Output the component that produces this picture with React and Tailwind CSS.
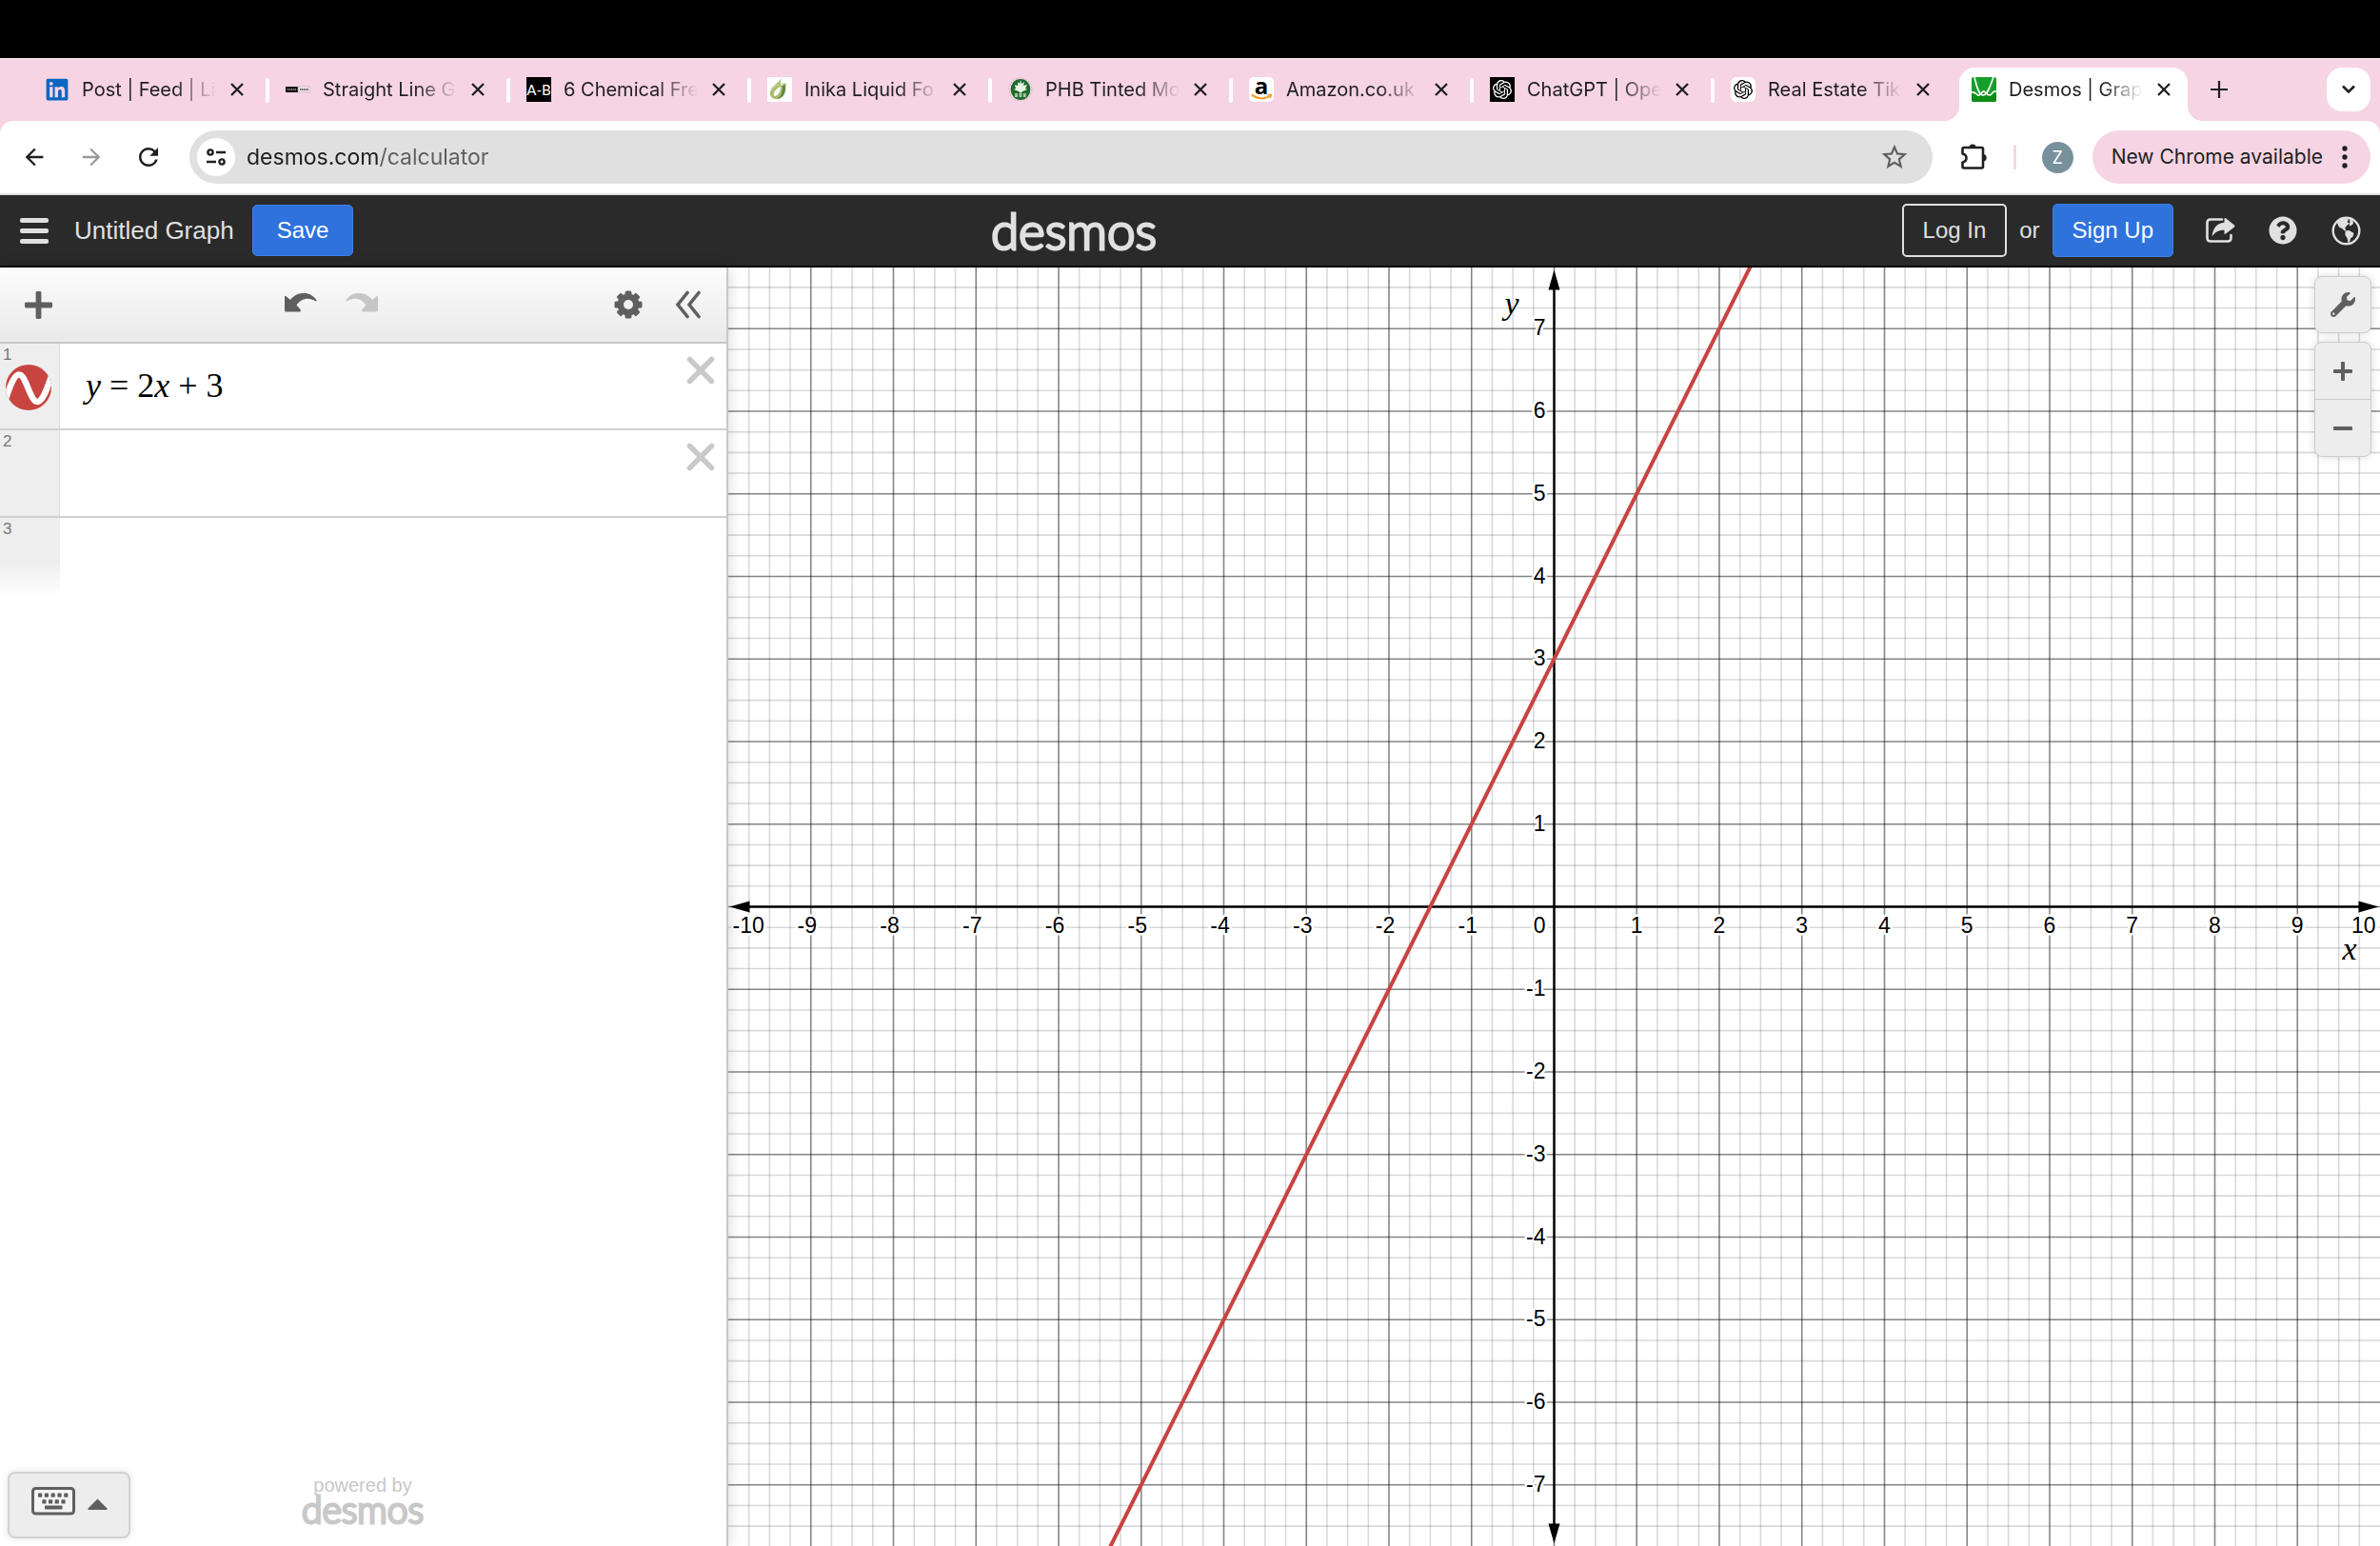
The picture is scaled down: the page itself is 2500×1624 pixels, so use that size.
import { useState } from "react";
import {
  MdArrowBack,
  MdArrowForward,
  MdRefresh,
  MdStarOutline,
} from "react-icons/md";
import { FaLinkedin, FaQuestionCircle, FaWrench } from "react-icons/fa";
import { SiOpenai } from "react-icons/si";

/* ================= FAVICONS ================= */
const LineFavicon = () => (
  <svg viewBox="0 0 26 26" className="size-[26px]">
    <rect x="0" y="10" width="13" height="6" fill="#111" />
    <rect x="13" y="10" width="13" height="6" fill="#f3e4ea" stroke="#b9a9af" strokeWidth="0.6" />
    <path d="M2 13h9" stroke="#999" strokeWidth="1.6" strokeDasharray="1.4 0.6" />
    <path d="M15 13h9" stroke="#333" strokeWidth="1.6" strokeDasharray="1.4 0.6" />
  </svg>
);

const AbFavicon = () => (
  <span className="flex size-[26px] items-center justify-center bg-black font-['Lato',sans-serif] text-[15px] leading-none text-white">
    A-B
  </span>
);

const LeafFavicon = () => (
  <svg viewBox="0 0 26 26" className="size-[26px] bg-white">
    <path d="M15 1C12 6 3 10 3 17c0 4 3 6 7 6 5 0 9-4 9-13l1-3c-2 0-4 0-5 2-2-2-1-5 0-8z" fill="#a9bd6c" />
    <path d="M19 8c1 8-2 14-9 15 5-3 6-8 6-14z" fill="#5d8a45" />
    <path d="M14 10c-5 2-8 6-7 10 4 0 7-4 7-10z" fill="#fff" />
    <path d="M4 12c4-4 9-6 17-6-7 1-12 3-17 8z" fill="#c6cf94" />
  </svg>
);

const PhbFavicon = () => (
  <svg viewBox="0 0 26 26" className="size-[26px]">
    <circle cx="13" cy="13" r="12" fill="none" stroke="#d9bccb" strokeWidth="1.2" strokeDasharray="2 1.4" />
    <ellipse cx="13" cy="13" rx="10.4" ry="11" fill="#1e6b2e" />
    <path
      d="M7 8l3 1 0-4 2 2 1-4 1 4 3-2-1 4 4-1-2 4 2 1-5 2-2 2-2-2-5-2 2-1z"
      fill="#e6f2e4"
    />
    <path d="M7 19h12" stroke="#9bc7a0" strokeWidth="4" strokeDasharray="3 1.4" />
  </svg>
);

const AmazonFavicon = () => (
  <span className="relative flex size-[26px] justify-center rounded-[5px] bg-white">
    <span className="font-['Open_Sans',sans-serif] text-[24px] font-bold leading-[18px] text-black">a</span>
    <svg viewBox="0 0 26 26" className="absolute inset-0 size-[26px]">
      <path d="M3 18.5c6 5 14 5 19 1" fill="none" stroke="#f79a1c" strokeWidth="2" />
      <path d="M19.5 18.6l4-.2-1.4 3.8" fill="none" stroke="#f79a1c" strokeWidth="1.4" />
    </svg>
  </span>
);

const DesmosFavicon = () => (
  <svg viewBox="0 0 26 26" className="size-[26px]">
    <rect width="26" height="26" rx="2" fill="#13a02a" />
    <path d="M0 17c4-3 7 4 10 2s4-5 7-2 5 0 9-1v8q0 2-2 2H2q-2 0-2-2z" fill="#0d8c17" />
    <path d="M3 0c2 8 4 19 9 19S20 8 23 0" fill="none" stroke="#fff" strokeWidth="1.6" />
    <path d="M0 16c5-1 5 4 8 3s3-5 5-4 3 4 6 4 2-5 7-4" fill="none" stroke="#fff" strokeWidth="1.6" />
  </svg>
);

const tabs = [
  { title: "Post | Feed | Li", icon: <FaLinkedin className="size-[26px] text-[#0a66c2]" /> },
  { title: "Straight Line G", icon: <LineFavicon /> },
  { title: "6 Chemical Fre", icon: <AbFavicon /> },
  { title: "Inika Liquid Fo", icon: <LeafFavicon /> },
  { title: "PHB Tinted Mo", icon: <PhbFavicon /> },
  { title: "Amazon.co.uk", icon: <AmazonFavicon /> },
  {
    title: "ChatGPT | Ope",
    icon: <SiOpenai className="size-[26px] bg-black p-[3px] text-white" />,
  },
  {
    title: "Real Estate Tik",
    icon: <SiOpenai className="size-[26px] rounded-[6px] bg-white p-[3px] text-black" />,
  },
  { title: "Desmos | Grap", icon: <DesmosFavicon />, active: true },
];

/* ================= SMALL ICONS ================= */
const CloseIcon = () => (
  <svg viewBox="0 0 14 14" className="size-[14px]" stroke="#1f1f1f" strokeWidth="2.3">
    <path d="M1 1l12 12M13 1L1 13" />
  </svg>
);

const TuneIcon = () => (
  <svg viewBox="0 0 20 20" className="size-5" fill="none" stroke="#1f1f1f" strokeWidth="2.4">
    <circle cx="4" cy="5" r="2.6" />
    <circle cx="16" cy="15" r="2.6" />
    <path d="M10 5h10M0 15h10" />
  </svg>
);

const PuzzleIcon = () => (
  <svg viewBox="0 0 28 28" className="size-7">
    <path
      d="M1.500 5.500q0-1.500 1.500-1.500h18.500q1.500 0 1.500 1.500v18.500q0 1.500-1.500 1.500H3q-1.500 0-1.500-1.500v-4.500q4-.8 4-4.500t-4-4.500z"
      fill="none"
      stroke="#1f1f1f"
      strokeWidth="2.6"
      strokeLinejoin="round"
    />
    <path d="M8.500 4a3.600 3.600 0 0 1 7.200 0zM23 11a3.600 3.600 0 0 1 0 7.400z" fill="#1f1f1f" />
  </svg>
);

const PlusIcon = () => (
  <svg viewBox="0 0 20 20" className="h-full w-full" fill="currentColor">
    <rect x="0" y="8" width="20" height="4" rx="1" />
    <rect x="8" y="0" width="4" height="20" rx="1" />
  </svg>
);

const UndoIcon = () => (
  <svg viewBox="0 0 34 20" className="h-5 w-[34px]" fill="currentColor">
    <path d="M0 3.500q.4-1.600 1.800 0l4.200 3.500C12-1.500 27-3.500 33.500 7.500c.5 1-.3 1.200-1 .7C25 3.500 17 5.500 12.500 12.500l4 4.500c.8 1.500.2 2.500-1 2.500H1.800Q0 19.500 0 18z" />
  </svg>
);

const GearIcon = () => (
  <svg viewBox="-15 -15 30 30" className="size-[30px]" fill="#5f5f5f">
    {[0, 45, 90, 135].map((a) => (
      <rect key={a} x="-3.400" y="-14.500" width="6.800" height="29" rx="1.500" transform={`rotate(${a})`} />
    ))}
    <circle r="11.500" />
    <circle r="5" fill="#f1f1f1" />
  </svg>
);

const CollapseIcon = () => (
  <svg viewBox="0 0 28 30" className="h-[30px] w-7" fill="none" stroke="#5f5f5f" strokeWidth="3.600" strokeLinecap="round">
    <path d="M13 2.500L3 15l10 12.500M25 2.500L15 15l10 12.500" />
  </svg>
);

const ShareIcon = () => (
  <svg viewBox="0 0 32 28" className="h-7 w-8">
    <path
      d="M18 2.500H6Q2.500 2.500 2.500 6v16q0 3.500 3.500 3.500h18q3.500 0 3.500-3.500v-3"
      fill="none"
      stroke="currentColor"
      strokeWidth="2.600"
      strokeLinecap="round"
    />
    <path
      d="M20.500 1.800q0-1.500 1.500-.5l9 7.200q1 1 0 2L22 17.500q-1.500 1-1.500-.5v-3.200C14.500 13.500 10.500 16 7.500 20.500 8.500 12.500 12 6.500 20.500 5.800z"
      fill="currentColor"
      stroke="#2a2a2a"
      strokeWidth="1.200"
      paintOrder="stroke"
    />
  </svg>
);

const GlobeIcon = () => (
  <svg viewBox="0 0 31 31" className="size-[31px]" fill="currentColor">
    <circle cx="15.500" cy="15.500" r="13.800" fill="none" stroke="currentColor" strokeWidth="2.400" />
    <path d="M7 5l5-2.500h4l2 1.500-1.500 2.500 2.500 1-3 2.500-2 3 1.500 1.500-1.500 1-3-2.500-3-1.500-2-4z" />
    <path d="M19 3l3.500 1.500L23 8l-3 2.500-1.500-1.500 1-2.500z" />
    <path d="M14.500 15.500l4-.5 5 3-1 3.500-2.500 2-1 4-1.500.5-1-5-2-3z" />
  </svg>
);

const DeleteIcon = () => (
  <svg viewBox="0 0 30 30" className="size-[30px]" stroke="#c9c9c9" strokeWidth="5.500" strokeLinecap="round">
    <path d="M3.500 3.500l23 23M26.500 3.500l-23 23" />
  </svg>
);

const CurveIcon = () => (
  <svg viewBox="-24 -24 48 48" className="size-12">
    <clipPath id="disc">
      <circle r="24" />
    </clipPath>
    <circle r="24" fill="#c74440" />
    <path
      d="M-24 12C-18-6-14-14-9.500-13.500-3-13 2 15 9 15 15 15 19 2 24-12"
      fill="none"
      stroke="#fff"
      strokeWidth="6.500"
      clipPath="url(#disc)"
    />
  </svg>
);

const KeyboardIcon = () => (
  <svg viewBox="0 0 46 30" className="h-[30px] w-[46px]" fill="#5f5f5f">
    <rect x="1.500" y="1.500" width="43" height="26.500" rx="3" fill="#f4f4f4" stroke="#5f5f5f" strokeWidth="3" />
    {[7, 13.8, 20.6, 27.4, 34.2].map((x) => (
      <rect key={x} x={x} y="6.500" width="4.200" height="4.200" rx="0.600" />
    ))}
    {[11.3, 18, 24.7, 31.4].map((x) => (
      <rect key={x} x={x} y="13.300" width="4.200" height="4.200" rx="0.600" />
    ))}
    <rect x="14" y="19.500" width="18.500" height="4" rx="0.800" />
  </svg>
);

/* ================= GRAPH ================= */
const UNIT = 86.75;
const range = (from, to) => Array.from({ length: to - from + 1 }, (_, i) => from + i);

const GridLabel = ({ children, ...props }) => (
  <text
    {...props}
    fontSize="23"
    fontFamily="'Liberation Sans', sans-serif"
    stroke="#fff"
    strokeWidth="5"
    strokeLinejoin="round"
    paintOrder="stroke"
  >
    {children}
  </text>
);

const Graph = () => (
  <svg
    viewBox="-867.5 -671.5 1735 1343"
    preserveAspectRatio="xMidYMid slice"
    className="block h-full w-full"
    role="img"
    aria-label="Graph of y = 2x + 3"
  >
    {/* MINOR LINES */}
    <g stroke="#000" strokeOpacity="0.15" strokeWidth="1.6">
      {range(-40, 40).filter((i) => i % 4).map((i) => (
        <line key={i} x1={(i * UNIT) / 4} x2={(i * UNIT) / 4} y1="-672" y2="672" />
      ))}
      {range(-31, 31).filter((i) => i % 4).map((i) => (
        <line key={i} y1={(i * UNIT) / 4} y2={(i * UNIT) / 4} x1="-868" x2="868" />
      ))}
    </g>

    {/* MAJOR LINES */}
    <g stroke="#000" strokeOpacity="0.48" strokeWidth="1.6">
      {range(-9, 9).map((i) => (
        <line key={i} x1={i * UNIT} x2={i * UNIT} y1="-672" y2="672" />
      ))}
      {range(-7, 7).map((i) => (
        <line key={i} y1={i * UNIT} y2={i * UNIT} x1="-868" x2="868" />
      ))}
    </g>

    {/* AXES */}
    <g stroke="#000" strokeWidth="2.4">
      <line x1="-850" x2="850" y1="0" y2="0" />
      <line x1="0" x2="0" y1="-655" y2="655" />
    </g>
    <path d="M-866 0l21-6v12zM866 0l-21-6v12zM0-669l-6 21h12zM0 669l-6-21h12z" />

    {/* LABELS */}
    {range(-9, 9).filter(Boolean).map((i) => (
      <GridLabel key={i} x={i * UNIT - (i < 0 ? 4 : 0)} y="27" textAnchor="middle">
        {i}
      </GridLabel>
    ))}
    <GridLabel x="-863" y="27">-10</GridLabel>
    <GridLabel x="863" y="27" textAnchor="end">10</GridLabel>
    <GridLabel x="-9" y="27" textAnchor="end">0</GridLabel>
    {range(-7, 7).filter(Boolean).map((i) => (
      <GridLabel key={i} x="-9" y={-i * UNIT + 7} textAnchor="end">
        {i}
      </GridLabel>
    ))}
    <g fontSize="34" fontStyle="italic" fontFamily="'Liberation Serif', serif">
      <text x="-52" y="-623">y</text>
      <text x="828" y="55">x</text>
    </g>

    {/* CURVE */}
    <line x1={-6 * UNIT} y1={9 * UNIT} x2={3 * UNIT} y2={-9 * UNIT} stroke="#c74440" strokeWidth="4" />
  </svg>
);

const App = () => {
  const [url, setUrl] = useState("desmos.com/calculator");
  const [expression, setExpression] = useState("");

  return (
    <div className="flex min-h-screen flex-col bg-black font-['Liberation_Sans',sans-serif] text-black">
      {/* TAB STRIP */}
      <div className="mt-[61px] flex h-[66px] border-t border-[#fbeaf1] bg-[#f6d4e3] pl-[34px] pr-[10px] pt-[9px] font-['Inter',sans-serif]">
        {tabs.map((tab, i) => (
          <div key={tab.title} className="flex">
            <div
              className={
                tab.active
                  ? "relative flex h-14 w-60 rounded-t-[16px] bg-white pb-[10px]"
                  : "flex h-14 w-60 pb-[10px]"
              }
            >
              {tab.active && (
                <>
                  <span className="absolute bottom-0 -left-4 size-4 bg-[radial-gradient(circle_at_0_0,transparent_16px,white_16px)]" />
                  <span className="absolute bottom-0 -right-4 size-4 bg-[radial-gradient(circle_at_100%_0,transparent_16px,white_16px)]" />
                </>
              )}
              <div className="flex min-w-0 flex-1 items-center pl-[13px] pr-[18px]">
                <span className="shrink-0">{tab.icon}</span>
                <a
                  href="#"
                  className="ml-[13px] mr-3 min-w-0 flex-1 whitespace-nowrap text-[20px] leading-7 text-[#1f1f1f] [mask-image:linear-gradient(to_right,black_68%,transparent_98%)]"
                >
                  {tab.title}
                </a>
                <button aria-label={`Close ${tab.title}`}>
                  <CloseIcon />
                </button>
              </div>
            </div>
            <div className="flex w-[13px] justify-center pt-[11px]">
              {i < tabs.length - 2 && <span className="h-[26px] w-1 rounded-full bg-white" />}
            </div>
          </div>
        ))}
        <button aria-label="New tab" className="ml-[11px] flex h-[46px] w-[18px] items-center">
          <svg viewBox="0 0 18 18" className="size-[18px]" stroke="#1f1f1f" strokeWidth="2.2">
            <path d="M9 0v18M0 9h18" />
          </svg>
        </button>
        <button
          aria-label="Search tabs"
          className="ml-auto flex size-[46px] items-center justify-center rounded-[16px] bg-white"
        >
          <svg viewBox="0 0 14 10" className="h-[10px] w-[14px]" fill="none" stroke="#1f1f1f" strokeWidth="2.6">
            <path d="M1 1.500l6 6 6-6" />
          </svg>
        </button>
      </div>

      {/* BROWSER TOOLBAR */}
      <div className="bg-[#f6d4e3]">
        <div className="flex h-[78px] items-center rounded-t-[14px] border-b-2 border-[#dde1df] bg-white pl-[22px] pr-[10px] font-['Inter',sans-serif]">
          <button aria-label="Back">
            <MdArrowBack className="size-7 text-[#1f1f1f]" />
          </button>
          <button aria-label="Forward" className="ml-8">
            <MdArrowForward className="size-7 text-[#9a9a9a]" />
          </button>
          <button aria-label="Reload" className="ml-[31px]">
            <MdRefresh className="size-[30px] text-[#1f1f1f]" />
          </button>
          <div className="ml-7 flex h-14 flex-1 items-center rounded-full bg-[#e0e0e0] pl-2 pr-6">
            <button
              aria-label="Site information"
              className="flex size-10 items-center justify-center rounded-full bg-white"
            >
              <TuneIcon />
            </button>
            <input
              aria-label="Address"
              value={url}
              onChange={(e) => setUrl(e.target.value)}
              className="ml-3 min-w-0 flex-1 bg-[linear-gradient(to_right,#1f1f1f_139px,#5e5e5e_139px)] bg-clip-text text-[23px] text-transparent outline-none"
            />
            <button aria-label="Bookmark">
              <MdStarOutline className="size-8 text-[#5e5e5e]" />
            </button>
          </div>
          <button aria-label="Extensions" className="ml-[30px]">
            <PuzzleIcon />
          </button>
          <span className="ml-[27px] h-[26px] w-[3px] rounded-full bg-[#f6d4e3]" />
          <button
            aria-label="Profile"
            className="ml-[27px] flex size-[33px] items-center justify-center rounded-full bg-[#78909c] text-[18px] text-white"
          >
            Z
          </button>
          <button className="ml-5 flex h-14 items-center gap-5 whitespace-nowrap rounded-full bg-[#f6d4e3] pl-5 pr-6 text-[21px] text-[#1f1f1f]">
            New Chrome available
            <svg viewBox="0 0 6 24" className="h-6 w-[6px]" fill="#1f1f1f">
              <circle cx="3" cy="3" r="2.700" />
              <circle cx="3" cy="12" r="2.700" />
              <circle cx="3" cy="21" r="2.700" />
            </svg>
          </button>
        </div>
      </div>

      {/* APP HEADER */}
      <header className="flex h-[76px] items-center border-b-2 border-black bg-[#2a2a2a] pl-[21px] pr-[20px] text-2xl text-[#e0e0e0]">
        <button aria-label="Menu" className="flex w-[30px] flex-col gap-[6px]">
          <span className="h-[5px] rounded-[2px] bg-[#e0e0e0]" />
          <span className="h-[5px] rounded-[2px] bg-[#e0e0e0]" />
          <span className="h-[5px] rounded-[2px] bg-[#e0e0e0]" />
        </button>
        <h1 className="ml-[27px] text-[26px]">Untitled Graph</h1>
        <button className="ml-[19px] h-[54px] rounded-[5px] border border-[#4080e8] bg-[#2f72dc] px-[25px] text-white">
          Save
        </button>
        <div className="flex flex-1 justify-center pr-[113px]">
          <span className="font-['Lato',sans-serif] text-[53px] font-light leading-[64px] [-webkit-text-stroke:3px_#e0e0e0]">
            desmos
          </span>
        </div>
        <button className="h-14 rounded-[5px] border-2 border-[#e0e0e0] px-5">Log In</button>
        <span className="mx-[13px]">or</span>
        <button className="h-14 rounded-[5px] border border-[#4080e8] bg-[#2f72dc] px-5 text-white">
          Sign Up
        </button>
        <button aria-label="Share" className="ml-[33px]">
          <ShareIcon />
        </button>
        <button aria-label="Help" className="ml-[35px]">
          <FaQuestionCircle className="size-[30px]" />
        </button>
        <button aria-label="Language" className="ml-9">
          <GlobeIcon />
        </button>
      </header>

      <main className="flex flex-1 bg-white">
        {/* EXPRESSION PANEL */}
        <section className="relative z-10 flex w-[765px] shrink-0 flex-col border-r-2 border-[#c8c8c8] bg-white shadow-[0_0_14px_rgba(0,0,0,0.18)]">
          <div className="flex h-20 items-center border-b-2 border-[#c8c8c8] bg-linear-to-b from-[#fcfcfc] to-[#eaeaea] pl-[26px] pr-[26px] text-[#5f5f5f]">
            <button aria-label="Add item" className="size-[29px]">
              <PlusIcon />
            </button>
            <div className="flex flex-1 justify-center gap-[30px] pb-1 pr-1">
              <button aria-label="Undo">
                <UndoIcon />
              </button>
              <button aria-label="Redo" disabled className="-scale-x-100 text-[#c6c6c6]">
                <UndoIcon />
              </button>
            </div>
            <button aria-label="Graph settings">
              <GearIcon />
            </button>
            <button aria-label="Hide list" className="ml-[34px]">
              <CollapseIcon />
            </button>
          </div>

          <ol className="text-[17px] leading-5 text-[#777]">
            <li className="flex h-[91px] border-b-2 border-[#d0d0d0]">
              <div className="relative w-[63px] border-r border-[#dcdcdc] bg-[#eee] pl-[3px] pt-[2px]">
                1
                <button aria-label="Hide graph" className="absolute left-[6px] top-[22px]">
                  <CurveIcon />
                </button>
              </div>
              <div
                role="textbox"
                tabIndex={0}
                aria-label="Expression 1"
                className="flex flex-1 items-center gap-[9px] pb-[2px] pl-[27px] font-['Liberation_Serif',serif] text-[36px] leading-none text-black"
              >
                <i>y</i>
                <span>=</span>
                <span>
                  2<i>x</i>
                </span>
                <span>+</span>
                <span>3</span>
              </div>
              <button aria-label="Delete expression 1" className="mr-3 mt-[13px] size-[30px]">
                <DeleteIcon />
              </button>
            </li>
            <li className="flex h-[92px] border-b-2 border-[#d0d0d0]">
              <div className="w-[63px] border-r border-[#dcdcdc] bg-[#eee] pl-[3px] pt-[2px]">2</div>
              <input
                aria-label="Expression 2"
                value={expression}
                onChange={(e) => setExpression(e.target.value)}
                className="min-w-0 flex-1 pl-[27px] font-['Liberation_Serif',serif] text-[36px] text-black outline-none"
              />
              <button aria-label="Delete expression 2" className="mr-3 mt-[13px] size-[30px]">
                <DeleteIcon />
              </button>
            </li>
            <li className="flex h-[84px]">
              <div className="w-[63px] bg-linear-to-b from-[#eee] from-55% to-white pl-[3px] pt-[2px]">3</div>
            </li>
          </ol>

          <div className="mt-auto flex items-end pb-2 pl-2">
            <button
              aria-label="Show keypad"
              className="flex h-[70px] w-[129px] justify-center gap-[13px] rounded-[8px] border-2 border-[#d2d2d2] bg-[#ededed] pt-[14px] shadow-[0_0_8px_rgba(0,0,0,0.12)]"
            >
              <KeyboardIcon />
              <svg viewBox="0 0 21 12" className="mt-3 h-3 w-[21px]" fill="#5f5f5f">
                <path d="M10.500 0.500L20.500 10.500q.5 1.500-1 1.500h-18q-1.500 0-1-1.500z" />
              </svg>
            </button>
            <div className="flex flex-1 flex-col items-center pb-4 pr-[138px] text-[#c8c8c8]">
              <span className="text-[20px] leading-5">powered by</span>
              <span className="font-['Lato',sans-serif] text-[39px] font-light leading-[30px] [-webkit-text-stroke:3px_#c8c8c8]">
                desmos
              </span>
            </div>
          </div>
        </section>

        {/* GRAPH PAPER */}
        <section className="relative min-w-0 flex-1">
          <div className="absolute inset-0">
            <Graph />
          </div>
          <div className="absolute right-[9px] top-[9px] flex flex-col gap-[9px] text-[#5f5f5f]">
            <button
              aria-label="Graph settings"
              className="flex size-[60px] items-center justify-center rounded-[8px] border border-[#ccc] bg-[#ededed] shadow-[0_0_8px_rgba(0,0,0,0.15)]"
            >
              <FaWrench className="size-[26px]" />
            </button>
            <div className="flex flex-col rounded-[8px] border border-[#ccc] bg-[#ededed] shadow-[0_0_8px_rgba(0,0,0,0.15)]">
              <button
                aria-label="Zoom in"
                className="flex h-[60px] w-[58px] items-center justify-center border-b border-[#ccc]"
              >
                <span className="size-5">
                  <PlusIcon />
                </span>
              </button>
              <button aria-label="Zoom out" className="flex h-[59px] w-[58px] items-center justify-center">
                <span className="h-1 w-5 rounded-[1px] bg-[#5f5f5f]" />
              </button>
            </div>
          </div>
        </section>
      </main>
    </div>
  );
};

export default App;
